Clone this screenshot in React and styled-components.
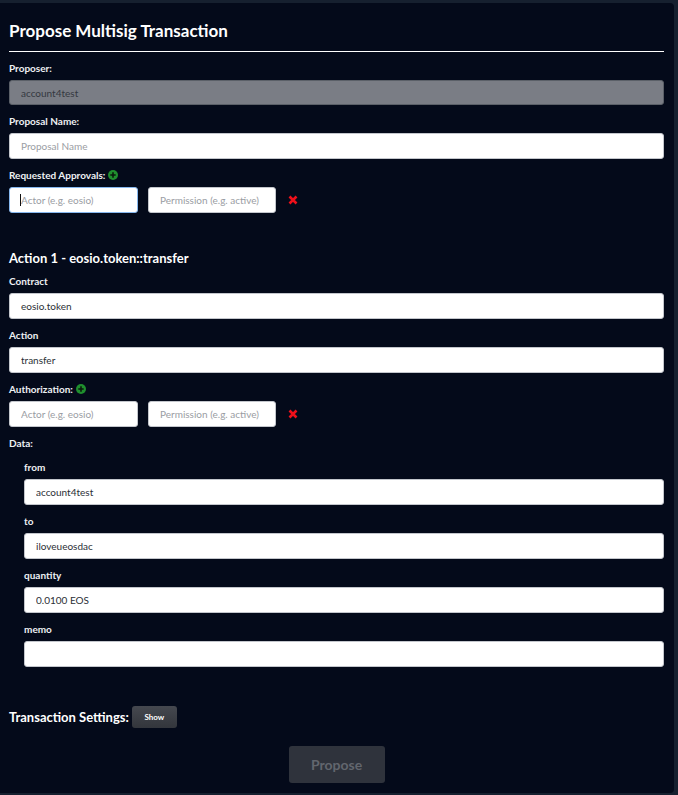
import React from 'react';
import styled, { createGlobalStyle } from 'styled-components';

const Global = createGlobalStyle`
  html, body {
    margin: 0;
    padding: 0;
    background: #16202f;
    font-family: Lato, "Open Sans", sans-serif;
  }
  * { box-sizing: border-box; }
`;

const Panel = styled.div`
  margin: 3px 4px 2px 0;
  height: 790px;
  background: #040a1a;
  border-radius: 0 4px 4px 0;
  padding: 17px 10px 0 9px;
`;

const Title = styled.h1`
  margin: 0;
  font-size: 17px;
  line-height: 22px;
  font-weight: 700;
  color: #fff;
  padding-bottom: 9px;
  border-bottom: 1px solid #fff;
  margin-bottom: 10px;
`;

const Field = styled.div`
  margin-bottom: ${p => p.$mb ?? 10}px;
`;

const Label = styled.div`
  display: flex;
  align-items: center;
  gap: 3px;
  font-size: 10px;
  font-weight: 700;
  line-height: 12px;
  color: #eef0f3;
  margin-bottom: ${p => p.$gap ?? 6}px;
`;

const Input = styled.input`
  display: block;
  width: ${p => p.$w ? `${p.$w}px` : '100%'};
  height: ${p => p.$h ?? 26}px;
  padding: 0 11px;
  font-family: Lato, "Open Sans", sans-serif;
  font-size: 10px;
  color: #2b2f36;
  background: ${p => p.disabled ? '#7a7d85' : '#fff'};
  border: 1px solid ${p => p.$focus ? '#86b7ee' : p.disabled ? '#5b6068' : '#c3c6cc'};
  border-radius: 3px;
  outline: none;
  &::placeholder { color: #9a9da3; }
  &:disabled { color: #343840; }
`;

const Row = styled.div`
  display: flex;
  align-items: center;
  gap: 10px;
`;

const CaretWrap = styled.div`
  position: relative;
`;

const Caret = styled.span`
  position: absolute;
  left: 11px;
  top: 7px;
  width: 1px;
  height: 12px;
  background: #111;
`;

const Remove = styled.span`
  display: flex;
  margin-left: 2px;
`;

const ActionHeading = styled.h2`
  margin: 37px 0 9px;
  font-size: 13px;
  line-height: 16px;
  font-weight: 700;
  color: #fff;
`;

const DataBlock = styled.div`
  padding-left: 15px;
`;

const SettingsRow = styled.div`
  display: flex;
  align-items: center;
  gap: 3px;
  margin-top: 39px;
`;

const SettingsTitle = styled.span`
  font-size: 13px;
  font-weight: 700;
  color: #fff;
`;

const ShowButton = styled.button`
  width: 45px;
  height: 22px;
  border: none;
  border-radius: 3px;
  background: linear-gradient(#45484f, #33363c);
  color: #fff;
  font-family: Lato, sans-serif;
  font-size: 8px;
  font-weight: 700;
  padding: 0;
`;

const Center = styled.div`
  display: flex;
  justify-content: center;
  margin-top: 18px;
`;

const ProposeButton = styled.button`
  width: 96px;
  height: 37px;
  border: none;
  border-radius: 3px;
  background: #2f333c;
  color: #62666e;
  font-family: Lato, sans-serif;
  font-size: 14px;
  font-weight: 700;
`;

const PlusIcon = () => (
  <svg width="10" height="10" viewBox="0 0 10 10">
    <circle cx="5" cy="5" r="5" fill="#1f8f2e" />
    <path d="M5 2.3v5.4M2.3 5h5.4" stroke="#0a1a0c" strokeWidth="1.6" />
  </svg>
);

const XIcon = () => (
  <svg width="10" height="10" viewBox="0 0 10 10">
    <path d="M1.5 1.5l7 7M8.5 1.5l-7 7" stroke="#f0101a" strokeWidth="2.6" />
  </svg>
);

const TextField = ({ label, value, placeholder, disabled, h }) => (
  <Field>
    <Label>{label}</Label>
    <Input defaultValue={value} placeholder={placeholder} disabled={disabled} $h={h} readOnly={disabled} />
  </Field>
);

const PermRow = ({ focus }) => (
  <Row>
    {focus ? (
      <CaretWrap>
        <Input $w={129} $focus placeholder="Actor (e.g. eosio)" />
        <Caret />
      </CaretWrap>
    ) : (
      <Input $w={129} placeholder="Actor (e.g. eosio)" />
    )}
    <Input $w={128} placeholder="Permission (e.g. active)" />
    <Remove><XIcon /></Remove>
  </Row>
);

export default function App() {
  return (
    <>
      <Global />
      <Panel>
        <Title>Propose Multisig Transaction</Title>
        <TextField label="Proposer:" value="account4test" disabled h={25} />
        <TextField label="Proposal Name:" placeholder="Proposal Name" />
        <Field $mb={0}>
          <Label>Requested Approvals: <PlusIcon /></Label>
          <PermRow focus />
        </Field>

        <ActionHeading>Action 1 - eosio.token::transfer</ActionHeading>
        <TextField label="Contract" value="eosio.token" />
        <TextField label="Action" value="transfer" />
        <Field>
          <Label>Authorization: <PlusIcon /></Label>
          <PermRow />
        </Field>
        <Label $gap={12}>Data:</Label>
        <DataBlock>
          <TextField label="from" value="account4test" />
          <TextField label="to" value="iloveueosdac" />
          <TextField label="quantity" value="0.0100 EOS" />
          <Field $mb={0}>
            <Label>memo</Label>
            <Input defaultValue="" />
          </Field>
        </DataBlock>

        <SettingsRow>
          <SettingsTitle>Transaction Settings:</SettingsTitle>
          <ShowButton>Show</ShowButton>
        </SettingsRow>
        <Center>
          <ProposeButton disabled>Propose</ProposeButton>
        </Center>
      </Panel>
    </>
  );
}
